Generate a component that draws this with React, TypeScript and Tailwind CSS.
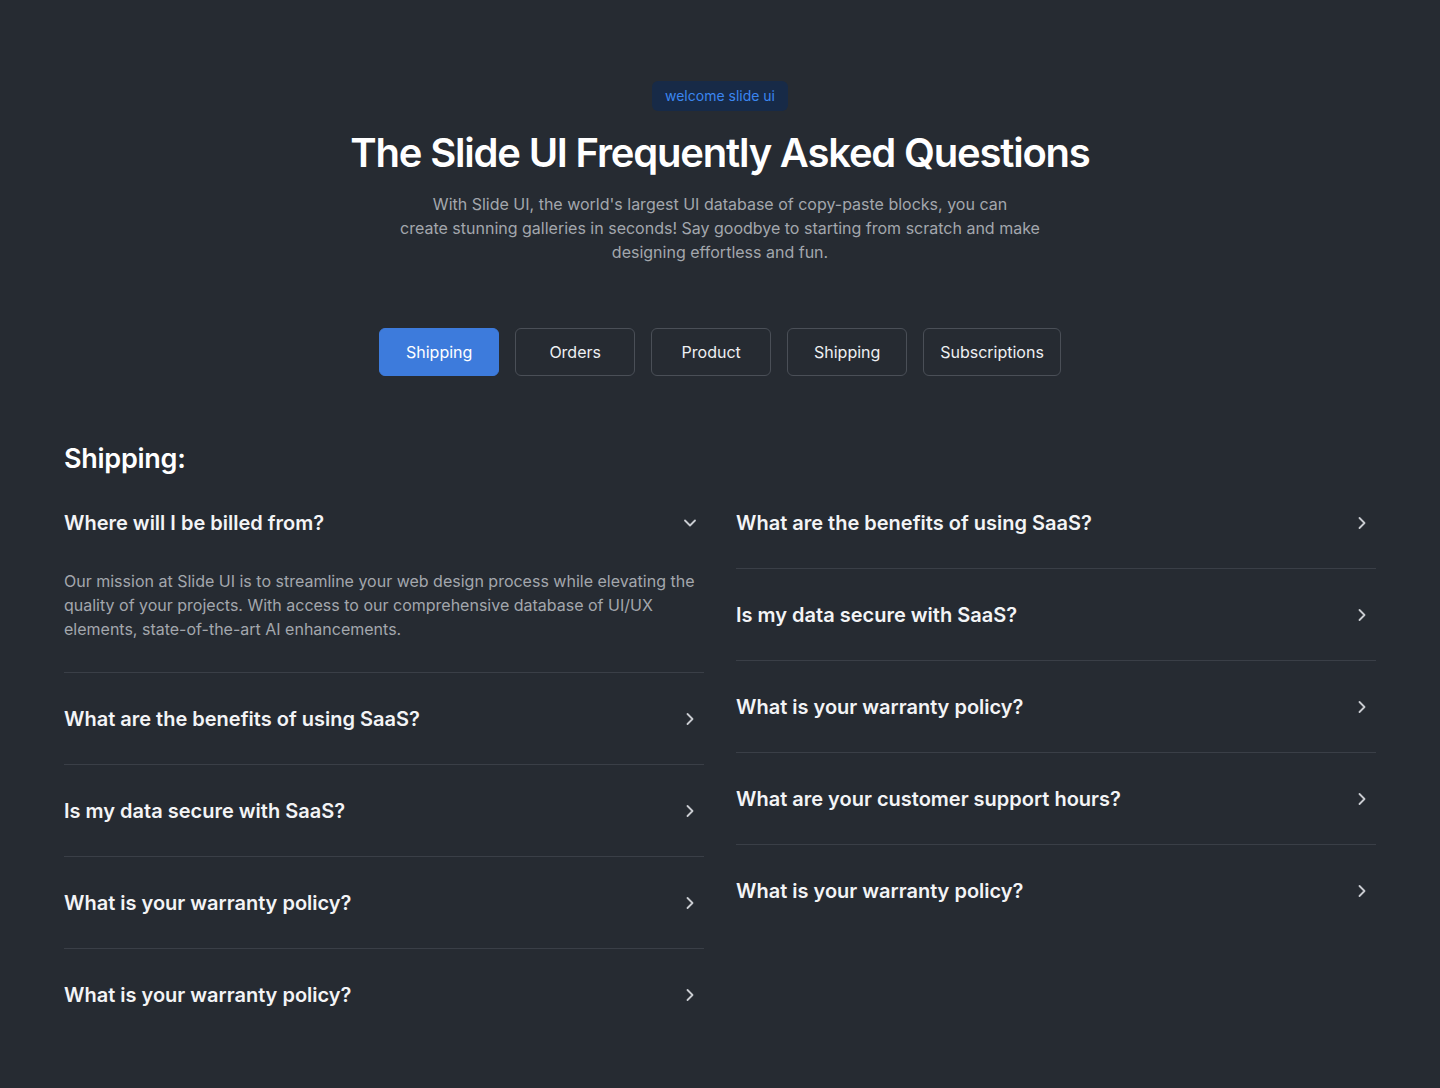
import { ChevronDown, ChevronRight } from 'lucide-react';

type Faq = {
  question: string;
  answer?: string;
  open?: boolean;
};

const tabs = ['Shipping', 'Orders', 'Product', 'Shipping', 'Subscriptions'];

const leftFaqs: Faq[] = [
  {
    question: 'Where will I be billed from?',
    answer:
      'Our mission at Slide UI is to streamline your web design process while elevating the quality of your projects. With access to our comprehensive database of UI/UX elements, state-of-the-art AI enhancements.',
    open: true,
  },
  { question: 'What are the benefits of using SaaS?' },
  { question: 'Is my data secure with SaaS?' },
  { question: 'What is your warranty policy?' },
  { question: 'What is your warranty policy?' },
];

const rightFaqs: Faq[] = [
  { question: 'What are the benefits of using SaaS?' },
  { question: 'Is my data secure with SaaS?' },
  { question: 'What is your warranty policy?' },
  { question: 'What are your customer support hours?' },
  { question: 'What is your warranty policy?' },
];

function FaqItem({ faq }: { faq: Faq }) {
  return (
    <div className="border-b border-[#3a3f47] pt-8 pb-[31px] last:border-b-0">
      <div className="flex items-center justify-between">
        <h3 className="text-[20px] font-semibold leading-7 text-[#f3f4f6]">{faq.question}</h3>
        {faq.open ? (
          <ChevronDown size={20} className="mr-[4px] text-[#c9ccd1]" strokeWidth={2.2} />
        ) : (
          <ChevronRight size={20} className="mr-[4px] text-[#c9ccd1]" strokeWidth={2.2} />
        )}
      </div>
      {faq.open && faq.answer && (
        <p className="mt-8 pr-2 text-base leading-6 text-[#a3a7ad]">{faq.answer}</p>
      )}
    </div>
  );
}

export default function App() {
  return (
    <div
      className="min-h-screen bg-[#262b32] px-16 pt-[81px] pb-12"
      style={{ fontFamily: 'Inter, "Noto Sans", sans-serif' }}
    >
      <div className="flex flex-col items-center text-center">
        <span className="rounded-md bg-[#172a47] px-[13px] py-[5px] text-sm leading-5 text-[#3b86f0]">
          welcome slide ui
        </span>
        <h1 className="mt-[18px] text-[40px] font-semibold leading-[48px] tracking-[-0.03em] text-white">
          The Slide UI Frequently Asked Questions
        </h1>
        <p className="mt-[15px] max-w-[648px] text-base leading-6 text-[#a3a7ad]">
          With Slide UI, the world's largest UI database of copy-paste blocks, you can
          <br />
          create stunning galleries in seconds! Say goodbye to starting from scratch and make
          designing effortless and fun.
        </p>

        <div className="mt-16 flex gap-4">
          {tabs.map((tab, i) => (
            <button
              key={i}
              className={
                i === 0
                  ? 'h-12 min-w-[120px] rounded-md border border-[#3d7bdc] bg-[#3d7bdc] px-4 text-base text-white'
                  : 'h-12 min-w-[120px] rounded-md border border-[#4a4f57] bg-transparent px-4 text-base text-[#eef0f2]'
              }
            >
              {tab}
            </button>
          ))}
        </div>
      </div>

      <h2 className="mt-16 text-[27px] font-semibold leading-[37px] tracking-[-0.01em] text-white">Shipping:</h2>

      <div className="grid grid-cols-2 gap-8">
        <div className="flex flex-col">
          {leftFaqs.map((faq, i) => (
            <FaqItem key={i} faq={faq} />
          ))}
        </div>
        <div className="flex flex-col">
          {rightFaqs.map((faq, i) => (
            <FaqItem key={i} faq={faq} />
          ))}
        </div>
      </div>
    </div>
  );
}
